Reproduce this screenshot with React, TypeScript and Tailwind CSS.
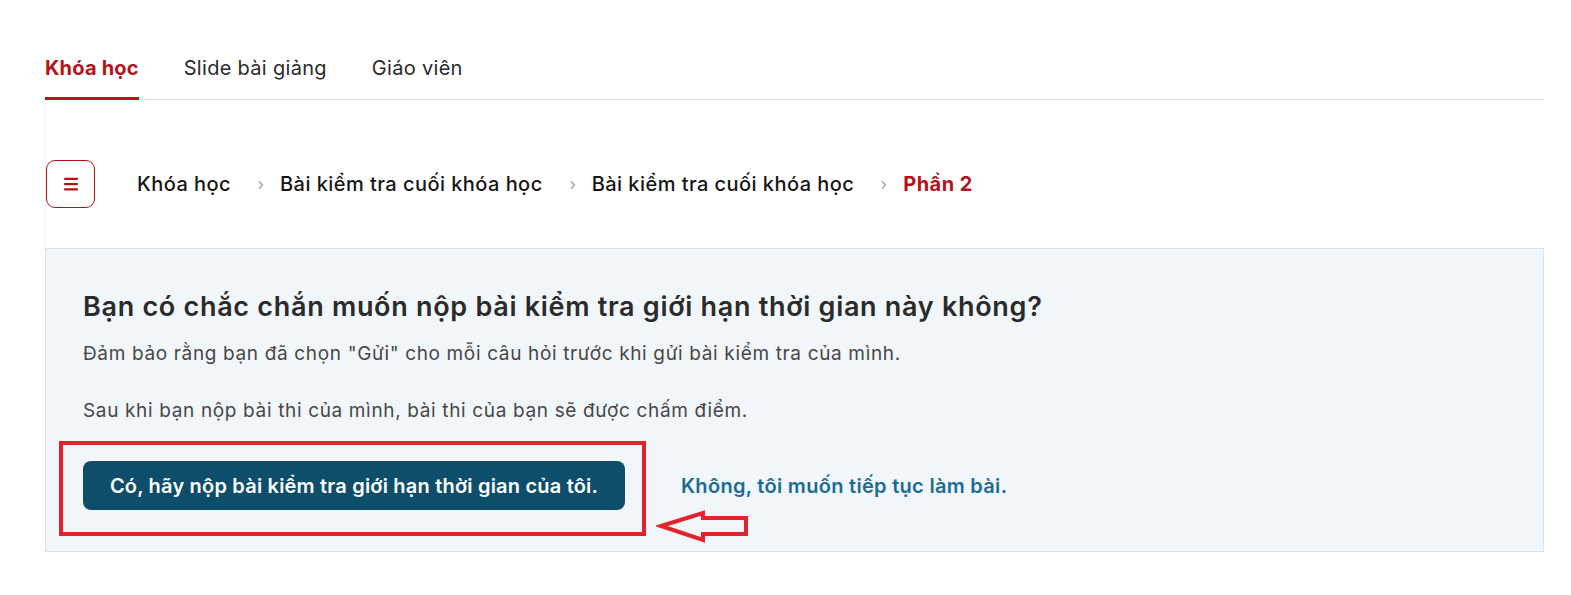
import { Menu } from 'lucide-react';

// -- Data --------------------------------------------------------------------

const tabs = ['Khóa học', 'Slide bài giảng', 'Giáo viên'];
const crumbs = ['Khóa học', 'Bài kiểm tra cuối khóa học', 'Bài kiểm tra cuối khóa học'];

// -- Sub-components ----------------------------------------------------------

const Chevron = () => (
  <svg width="8" height="12" viewBox="0 0 8 12" className="ml-[26px] mr-[15px] mt-[2px]">
    <path d="M2 2.5 L5.5 6 L2 9.5" fill="none" stroke="#9ca3af" strokeWidth="1.4" />
  </svg>
);

const TabBar = () => (
  <div className="flex gap-[45px] border-b border-[#e2e2e2]">
    {tabs.map((tab, i) => (
      <div
        key={tab}
        className={
          i === 0
            ? 'pb-[13px] text-[20px] font-bold tracking-[0.2px] text-[#b3131b] border-b-[3px] border-[#b3131b] -mb-px'
            : 'pb-[16px] text-[20px] tracking-[0.3px] text-[#2a2a2a]'
        }
      >
        {tab}
      </div>
    ))}
  </div>
);

const Breadcrumbs = () => (
  <div className="flex items-center border-l border-[#f3f3f3] pt-[60px] pb-[40px]">
    <button className="flex h-[48px] w-[49px] items-center justify-center rounded-[9px] border border-[#b3131b] text-[#b3131b]">
      <Menu size={18} strokeWidth={3} />
    </button>
    <div className="ml-[42px] flex items-center text-[20px] font-medium tracking-[0.45px] text-[#161616]">
      {crumbs.map((c, i) => (
        <div key={i} className="flex items-center">
          <span>{c}</span>
          <Chevron />
        </div>
      ))}
      <span className="font-bold text-[#b3131b]">Phần 2</span>
    </div>
  </div>
);

// Red screenshot annotation: hollow arrow pointing left at the submit button.
const AnnotationArrow = () => (
  <svg width="96" height="40" viewBox="0 0 96 40" className="absolute left-[610px] top-[257px]">
    <path
      d="M5 20 L47 7 L47 12 L90 12 L90 28 L47 28 L47 34 Z"
      fill="none"
      stroke="#e3232b"
      strokeWidth="4"
      strokeLinejoin="miter"
    />
  </svg>
);

const ConfirmPanel = () => (
  <div className="relative border border-[#dcdfe3] bg-[#f1f6fa] px-[37px] pt-[40px] pb-[41px]">
    <h2 className="text-[27px] font-semibold leading-[36px] tracking-[0.7px] text-[#2b2b2b]">
      Bạn có chắc chắn muốn nộp bài kiểm tra giới hạn thời gian này không?
    </h2>
    <p className="mt-[14px] text-[19px] leading-[30px] tracking-[0.65px] text-[#474747]">
      Đảm bảo rằng bạn đã chọn "Gửi" cho mỗi câu hỏi trước khi gửi bài kiểm tra của mình.
    </p>
    <p className="mt-[27px] text-[19px] leading-[30px] tracking-[0.65px] text-[#474747]">
      Sau khi bạn nộp bài thi của mình, bài thi của bạn sẽ được chấm điểm.
    </p>
    <div className="mt-[35px] flex items-center gap-[56px]">
      <button className="h-[49px] w-[542px] rounded-[8px] bg-[#0e4e6b] text-[20px] font-semibold tracking-[0.2px] text-white">
        Có, hãy nộp bài kiểm tra giới hạn thời gian của tôi.
      </button>
      <span className="text-[20px] font-semibold tracking-[0.3px] text-[#1d6b94]">Không, tôi muốn tiếp tục làm bài.</span>
    </div>
    <div className="absolute left-[13px] top-[192px] h-[95px] w-[587px] border-[4px] border-[#e3232b]" />
    <AnnotationArrow />
  </div>
);

// -- Main component ----------------------------------------------------------

const App = () => (
  <div className="min-h-[595px] bg-white px-[45px] pt-[53px]" style={{ fontFamily: 'Inter, "Noto Sans", sans-serif' }}>
    <div className="w-[1499px]">
      <TabBar />
      <Breadcrumbs />
      <ConfirmPanel />
    </div>
  </div>
);

export default App;
